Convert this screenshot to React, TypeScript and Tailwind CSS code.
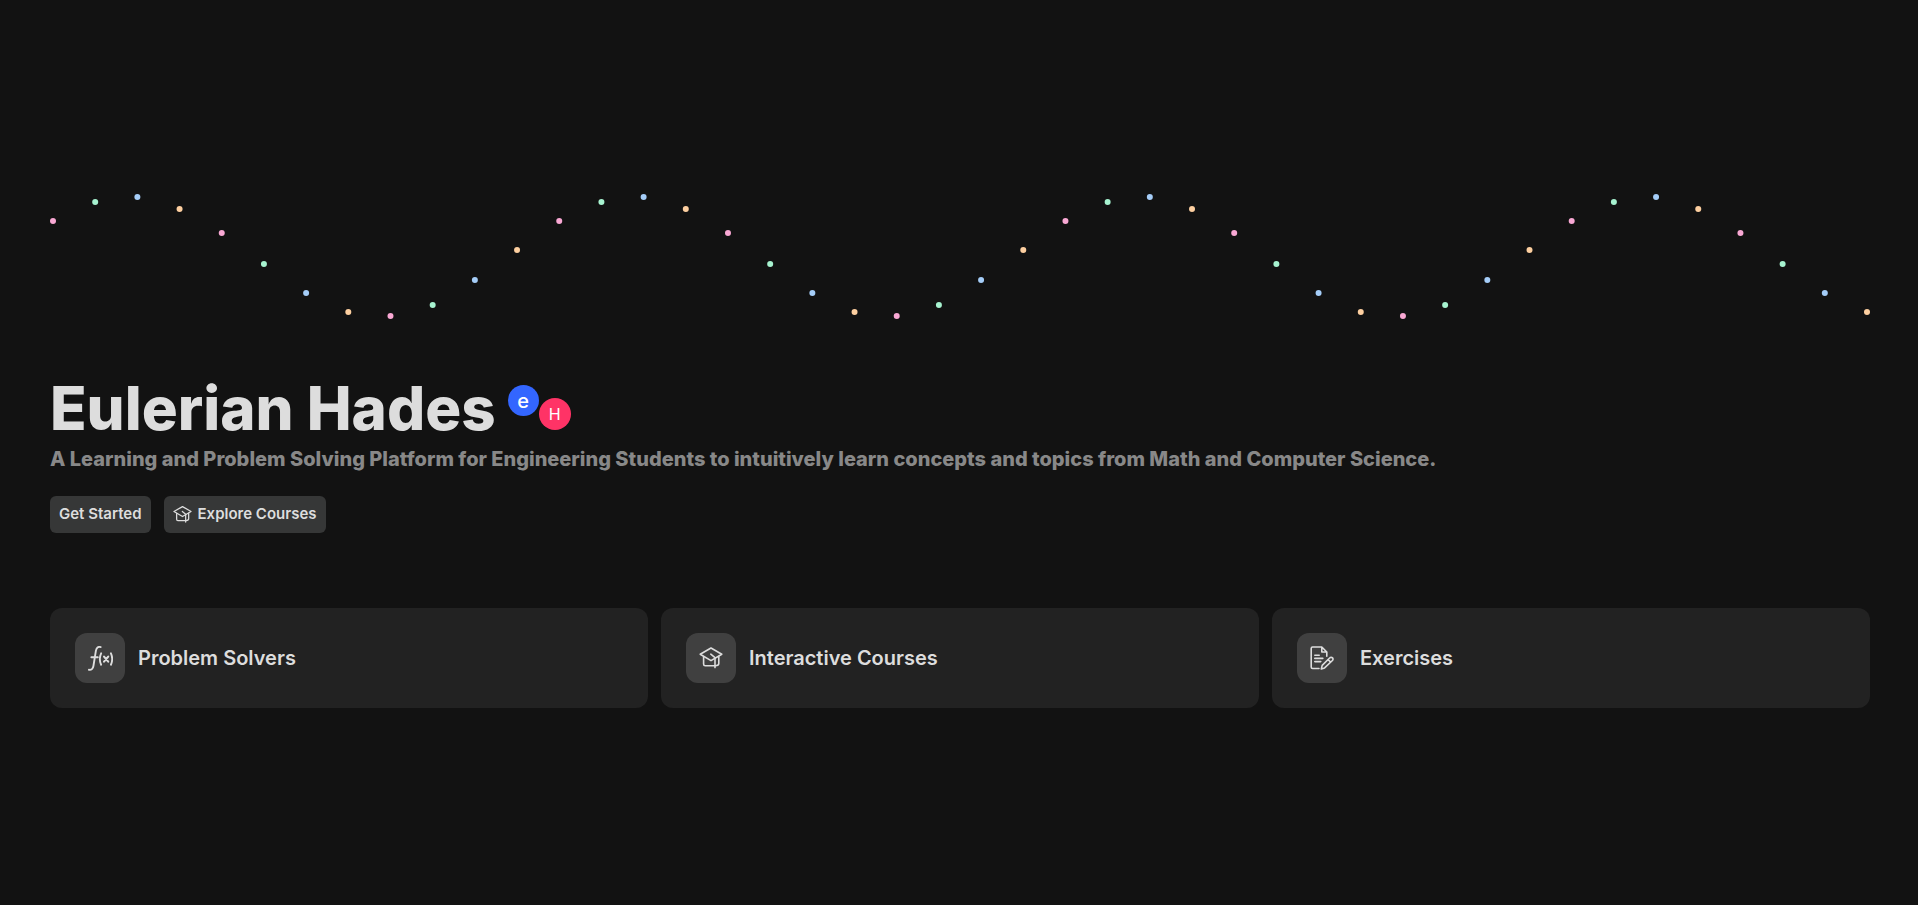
import React from "react";

const DOT_COLORS = ["#f9a8d4", "#a7f3d0", "#a5cdf8", "#fdcfa0"];
const DOT_COUNT = 44;

function Wave() {
  return (
    <svg className="block h-[126px] w-full overflow-visible" aria-hidden="true">
      {Array.from({ length: DOT_COUNT }, (_, i) => (
        <circle
          key={i}
          cx={`${0.165 + (i / (DOT_COUNT - 1)) * 99.67}%`}
          cy={Math.round(62.8 - 60 * Math.sin(0.644 + (i * Math.PI) / 6))}
          r={3}
          fill={DOT_COLORS[i % DOT_COLORS.length]}
        />
      ))}
    </svg>
  );
}

type IconProps = { className?: string };

const stroke = {
  fill: "none",
  stroke: "currentColor",
  strokeWidth: 1.6,
  strokeLinecap: "round",
  strokeLinejoin: "round",
} as const;

function CapIcon({ className }: IconProps) {
  return (
    <svg viewBox="0 0 24 24" className={className} {...stroke} aria-hidden="true">
      <path d="M12 2 1.200 8.200 12 14.600 22.800 8.200Z" />
      <path d="M4.600 10.600v7.400c0 1 .6 1.700 1.600 1.700h9.400M19.800 10.400v7c0 1.300-1 2.200-3.400 2.300" />
      <path d="M11.800 8.200l4.200 3.400v10" />
    </svg>
  );
}

function FunctionIcon({ className }: IconProps) {
  return (
    <svg viewBox="0 0 24 24" className={className} {...stroke} strokeWidth={1.8} aria-hidden="true">
      <path d="M12.200 1c-2.600-.6-4 .7-4.600 3.400L5.200 19.200C4.700 22 3.300 23.300.9 22.800M3.200 10.800h6.200" />
      <path d="M12.600 7c-1.500 3.300-1.500 7.700 0 11M22 7c1.500 3.300 1.500 7.700 0 11" />
      <path d="M15.400 10.200l4 4.800M19.400 10.200l-4 4.800" strokeWidth={2} />
    </svg>
  );
}

function ExerciseIcon({ className }: IconProps) {
  return (
    <svg viewBox="0 0 24 24" className={className} {...stroke} aria-hidden="true">
      <path d="M9 22.500H2.600c-.8 0-1.400-.6-1.400-1.400V2.400C1.200 1.600 1.800 1 2.600 1h9.200l5 5v4.200M11.800 1v5h5" />
      <path d="M4.800 9.200h4.400M4.800 12.400h8M4.800 15.600h6" />
      <path d="M19.600 12c.9-.9 2.200-.8 2.900-.1.700.7.700 1.800-.1 2.600l-7.800 7.400-3.300 1 .9-3.500ZM18 13.500l2.600 2.600" />
    </svg>
  );
}

const CARDS = [
  { title: "Problem Solvers", Icon: FunctionIcon, size: "size-[25px]" },
  { title: "Interactive Courses", Icon: CapIcon, size: "size-6" },
  { title: "Exercises", Icon: ExerciseIcon, size: "size-6" },
];

export default function App() {
  return (
    <main className="flex min-h-screen flex-col bg-[#121212] pr-12 pl-[50px] pt-[194px] pb-16 font-['Inter','Liberation_Sans',sans-serif] text-[#dddddd]">
      <Wave />

      <header className="mt-[52px] flex flex-col items-start">
        <div className="flex items-start gap-3">
          <h1 className="text-[60px] leading-[72px] font-extrabold">Eulerian Hades</h1>
          <div className="mt-[13px] flex items-start text-white" aria-hidden="true">
            <span className="flex size-[31px] items-center justify-center rounded-full bg-[#3366ff] text-xl font-medium">e</span>
            <span className="mt-[13px] flex size-8 items-center justify-center rounded-full bg-[#ff3366] text-base">H</span>
          </div>
        </div>
        <p className="text-xl leading-[30px] font-extrabold text-[#888888]">
          A Learning and Problem Solving Platform for Engineering Students to intuitively learn concepts and topics from Math and Computer Science.
        </p>
        <div className="mt-[22px] flex gap-[13px] text-[15px] font-semibold">
          <button type="button" className="h-[37px] rounded-md bg-[#363737] px-[9px]">Get Started</button>
          <button type="button" className="flex h-[37px] items-center gap-1.5 rounded-md bg-[#363737] px-[9px]">
            <CapIcon className="size-[19px]" />
            Explore Courses
          </button>
        </div>
      </header>

      <section className="mt-[75px] grid grid-cols-3 gap-[13px]">
        {CARDS.map(({ title, Icon, size }) => (
          <a key={title} href="#" className="flex items-center gap-[13px] rounded-xl bg-[#222222] p-[25px]">
            <span className="flex size-[50px] items-center justify-center rounded-xl bg-[#404040]">
              <Icon className={size} />
            </span>
            <span className="text-xl font-semibold">{title}</span>
          </a>
        ))}
      </section>
    </main>
  );
}
